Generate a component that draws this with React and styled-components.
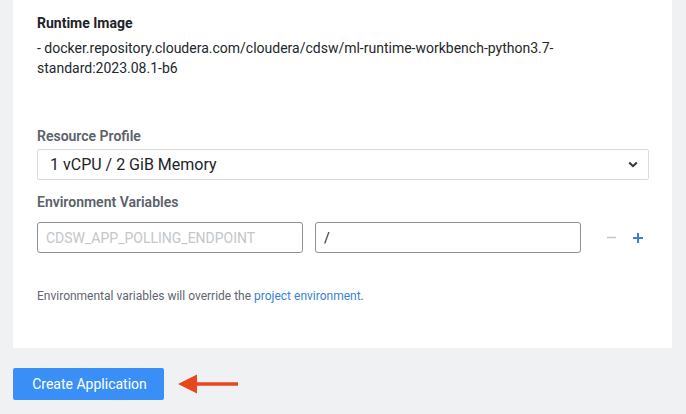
import React from 'react'
import styled, { createGlobalStyle } from 'styled-components'

const GlobalStyle = createGlobalStyle`
  html, body {
    margin: 0;
    padding: 0;
    background: #f0f1f3;
    font-family: Roboto, 'Liberation Sans', Arial, sans-serif;
  }
`

const Page = styled.div`
  padding: 0 14px 0 13px;
  width: 686px;
  height: 414px;
  box-sizing: border-box;
  overflow: hidden;
`

const Panel = styled.section`
  background: #ffffff;
  padding: 13px 23px 44px 24px;
`

const Title = styled.div`
  font-size: 14px;
  line-height: 20px;
  font-weight: 700;
  color: #1e2329;
`

const ImageText = styled.div`
  margin-top: 5px;
  font-size: 14px;
  line-height: 20px;
  color: #22272d;
  word-break: break-word;
`

const Field = styled.div`
  margin-top: ${(p) => p.gap}px;
`

const Label = styled.div`
  font-size: 14px;
  line-height: 18px;
  font-weight: 600;
  color: #5a616b;
  margin-bottom: ${(p) => p.gap}px;
`

const SelectBox = styled.div`
  height: 31px;
  box-sizing: border-box;
  border: 1px solid #d9dbde;
  border-radius: 2px;
  display: flex;
  align-items: center;
  padding: 0 12px;
  font-size: 16px;
  color: #1e2329;
  background: #fff;
`

const Chevron = styled.svg`
  margin-left: auto;
  margin-right: -2px;
`

const EnvRow = styled.div`
  display: grid;
  grid-template-columns: 1fr 1fr 56px;
  column-gap: 12px;
  align-items: center;
`

const TextInput = styled.div`
  height: 31px;
  box-sizing: border-box;
  border: 1px solid #8c9197;
  border-radius: 3px;
  display: flex;
  align-items: center;
  padding: 0 8px;
  font-size: 14px;
  color: ${(p) => (p.$placeholder ? '#c3c6ca' : '#1e2329')};
`

const Actions = styled.div`
  display: flex;
  padding-left: 7px;
  gap: 5px;
`

const IconButton = styled.span`
  width: 22px;
  height: 22px;
  display: flex;
  align-items: center;
  justify-content: center;
`

const Help = styled.p`
  margin: 35px 0 0;
  font-size: 12px;
  line-height: 16px;
  color: #5f6670;
`

const Link = styled.a`
  color: #3a7fd5;
  text-decoration: none;
`

const Footer = styled.div`
  display: flex;
  align-items: center;
  margin-top: 20px;
`

const PrimaryButton = styled.button`
  width: 151px;
  height: 32px;
  border: none;
  border-radius: 2px;
  background: #3a8ff7;
  color: #fff;
  font-family: inherit;
  font-size: 14px;
  padding: 0 0 0 2px;
`

const Arrow = styled.svg`
  margin-left: 14px;
`

const App = () => (
  <>
    <GlobalStyle />
    <Page>
      <Panel>
        <Title>Runtime Image</Title>
        <ImageText>
          - docker.repository.cloudera.com/cloudera/cdsw/ml-runtime-workbench-python3.7-
          <br />
          standard:2023.08.1-b6
        </ImageText>

        <Field gap={49}>
          <Label gap={4}>Resource Profile</Label>
          <SelectBox>
            1 vCPU / 2 GiB Memory
            <Chevron width="10" height="7" viewBox="0 0 10 7">
              <path d="M1.2 1.5 5 5.2 8.8 1.5" fill="none" stroke="#333" strokeWidth="2" />
            </Chevron>
          </SelectBox>
        </Field>

        <Field gap={13}>
          <Label gap={11}>Environment Variables</Label>
          <EnvRow>
            <TextInput $placeholder>CDSW_APP_POLLING_ENDPOINT</TextInput>
            <TextInput>/</TextInput>
            <Actions>
              <IconButton>
                <svg width="9" height="9" viewBox="0 0 9 9">
                  <path d="M0 4.5h9" stroke="#c4c6c9" strokeWidth="1.5" />
                </svg>
              </IconButton>
              <IconButton>
                <svg width="10" height="10" viewBox="0 0 10 10">
                  <path d="M0 5h10M5 0v10" stroke="#3a7fd5" strokeWidth="2" />
                </svg>
              </IconButton>
            </Actions>
          </EnvRow>
        </Field>

        <Help>
          Environmental variables will override the <Link href="#">project environment</Link>.
        </Help>
      </Panel>

      <Footer>
        <PrimaryButton>Create Application</PrimaryButton>
        <Arrow width="60" height="20" viewBox="0 0 60 20">
          <path d="M0 10 19 0.5v7.8H60v3.4H19v7.8z" fill="#e8461f" />
        </Arrow>
      </Footer>
    </Page>
  </>
)

export default App
